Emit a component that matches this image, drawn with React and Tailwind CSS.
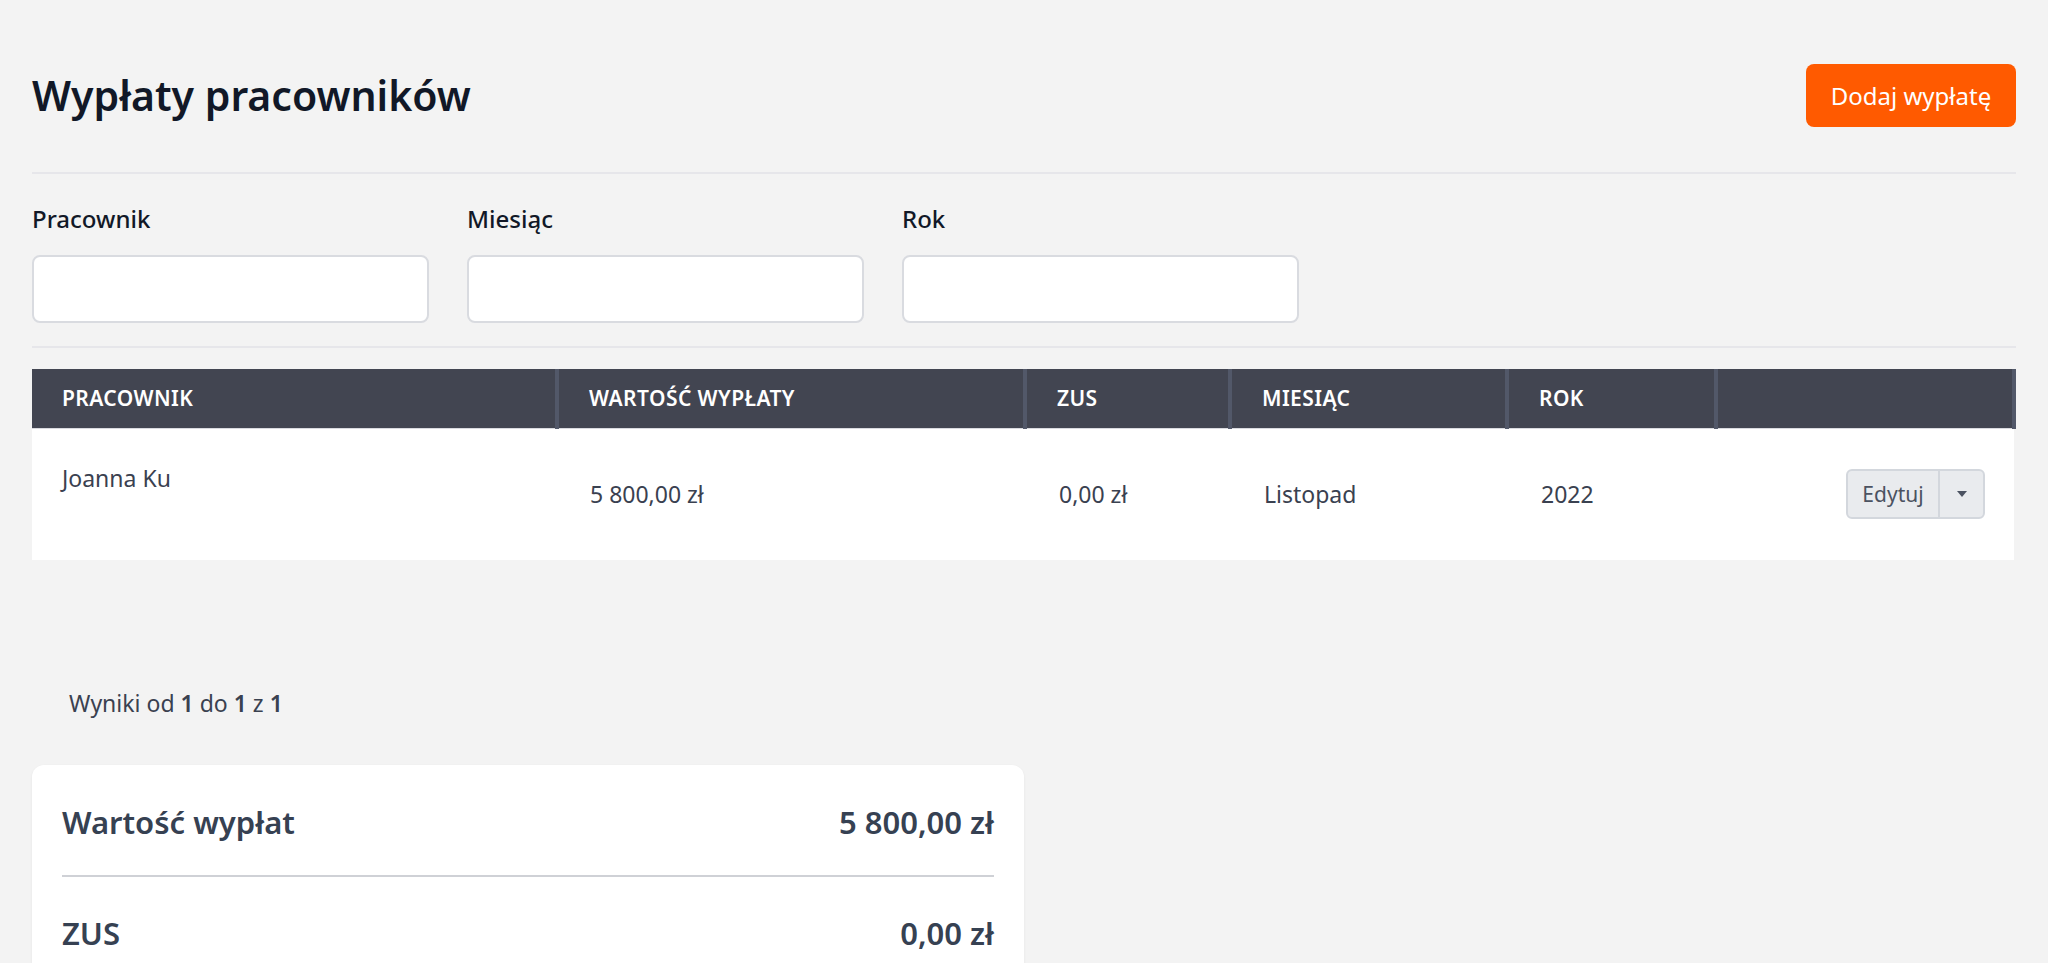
import React from "react";

const columns = [
  { label: "Pracownik", width: "w-[525px]" },
  { label: "Wartość wypłaty", width: "w-[468px]" },
  { label: "ZUS", width: "w-[205px]" },
  { label: "Miesiąc", width: "w-[277px]" },
  { label: "Rok", width: "w-[209px]" },
  { label: "", width: "" },
];

const payouts = [
  { id: 1, name: "Joanna Ku", amount: "5 800,00 zł", zus: "0,00 zł", month: "Listopad", year: "2022" },
];

const Filter = ({ label }) => (
  <div className="w-[397px]">
    <label className="block text-[24px] leading-[30px] font-medium text-[#111827]">{label}</label>
    <input
      type="text"
      className="mt-[21px] block h-[68px] w-full rounded-lg border-2 border-[#d9dbe0] bg-white px-4 text-[20px] outline-none"
    />
  </div>
);

const App = () => {
  return (
    <div className="min-h-screen bg-[#f3f3f3] px-8 pt-16 font-['Noto_Sans','Open_Sans',sans-serif]">
      <div className="flex h-[63px] items-center justify-between">
        <h1 className="text-[41px] leading-none font-semibold text-[#111827]">Wypłaty pracowników</h1>
        <button className="h-[63px] w-[210px] rounded-lg bg-[#ff5a00] text-[24px] text-white">Dodaj wypłatę</button>
      </div>

      <div className="mt-[45px] h-[2px] bg-[#e6e6ea]" />

      <div className="mt-[30px] flex gap-[38px]">
        <Filter label="Pracownik" />
        <Filter label="Miesiąc" />
        <Filter label="Rok" />
      </div>

      <div className="mt-[23px] h-[2px] bg-[#e6e6ea]" />

      <table className="mt-[21px] w-full table-fixed border-collapse">
        <thead>
          <tr className="h-[59px] bg-[#424551] border-b border-[#d9dadf]">
            {columns.map((col, i) => (
              <th
                key={i}
                className={`${col.width} ${i > 0 ? "border-l-4 border-[#525869]" : ""} ${i === columns.length - 1 ? "border-r-4" : ""} px-[30px] text-left text-[21px] font-semibold uppercase tracking-[0.02em] text-white`}
              >
                {col.label}
              </th>
            ))}
          </tr>
        </thead>
        <tbody>
          {payouts.map((p) => (
            <tr key={p.id} className="h-[132px] bg-white text-[23px] text-[#3a4150]">
              <td className="px-[30px] pt-[33px] align-top">
                <div className="leading-[32px]">{p.name}</div>
              </td>
              <td className="px-[33px] align-middle">{p.amount}</td>
              <td className="px-[34px] align-middle">{p.zus}</td>
              <td className="px-[34px] align-middle">{p.month}</td>
              <td className="px-[34px] align-middle">{p.year}</td>
              <td className="pr-[29px] align-middle">
                <div className="flex justify-end">
                  <div className="flex h-[50px] overflow-hidden rounded-md border-2 border-[#d3d7dd] bg-[#e9ebee] text-[21px] text-[#4b5261]">
                    <button className="w-[90px]">Edytuj</button>
                    <button className="flex w-[45px] items-center justify-center border-l-2 border-[#d3d7dd]">
                      <span className="h-0 w-0 border-x-[5px] border-t-[6px] border-x-transparent border-t-[#4b5261]" />
                    </button>
                  </div>
                </div>
              </td>
            </tr>
          ))}
        </tbody>
      </table>

      <p className="mt-[128px] pl-[37px] text-[23px] leading-[30px] text-[#3a4150]">
        Wyniki od <b className="font-semibold">1</b> do <b className="font-semibold">1</b> z <b className="font-semibold">1</b>
      </p>

      <div className="mt-[47px] w-[992px] rounded-xl bg-white px-[30px] pt-[37px] pb-[30px] shadow-[0_1px_3px_rgba(0,0,0,0.06)]">
        <div className="flex h-[40px] items-center justify-between text-[31px] font-semibold text-[#364152]">
          <span>Wartość wypłat</span>
          <span>5 800,00 zł</span>
        </div>
        <div className="mt-[33px] h-[2px] bg-[#cfd1d6]" />
        <div className="mt-[36px] flex h-[40px] items-center justify-between text-[31px] font-semibold text-[#364152]">
          <span>ZUS</span>
          <span>0,00 zł</span>
        </div>
      </div>
    </div>
  );
};

export default App;
